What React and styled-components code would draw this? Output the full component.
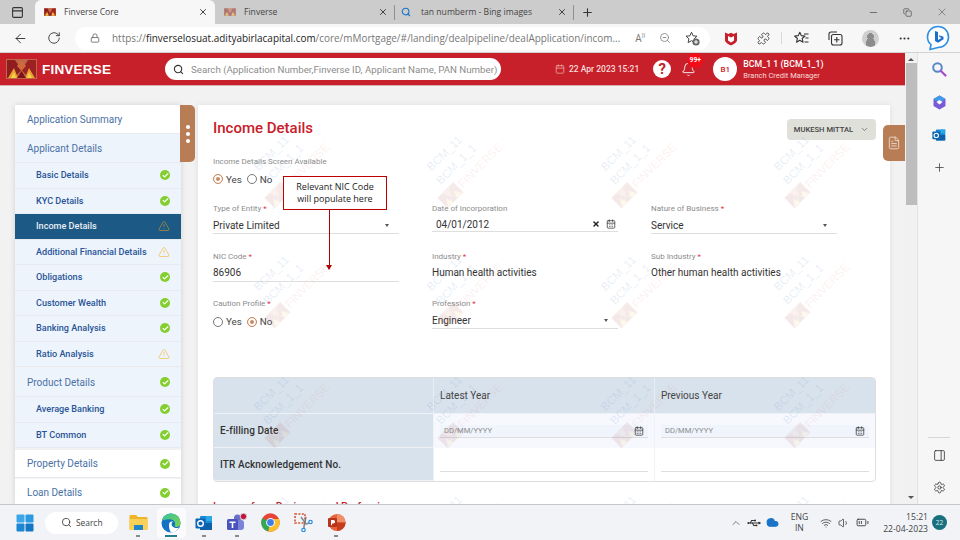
import React from "react";
import styled, { createGlobalStyle } from "styled-components";
import {
  ArrowLeft,
  RotateCw,
  Lock,
  Search,
  ZoomOut,
  Puzzle,
  Plus,
  X,
  Minus,
  Calendar,
  Bell,
  ChevronDown,
  ChevronUp,
  FileText,
  Settings,
  PanelRight,
  PanelTop,
  Wifi,
  Volume1,
  BatteryMedium,
  Usb,
  Cloud,
  Check,
  TriangleAlert,
  CalendarDays,
  Copy,
  MoreHorizontal,
} from "lucide-react";

const GlobalStyle = createGlobalStyle`
  html, body {
    margin: 0;
    padding: 0;
    background: #f2f2f2;
  }
  * {
    box-sizing: border-box;
  }
`;

const appFont = `"Roboto", "Liberation Sans", sans-serif`;
const uiFont = `"Open Sans", "Liberation Sans", sans-serif`;

const sideItems = [
  { label: "Application Summary", level: "top" },
  { label: "Applicant Details", level: "section" },
  { label: "Basic Details", level: "sub", status: "ok" },
  { label: "KYC Details", level: "sub", status: "ok" },
  { label: "Income Details", level: "sub", status: "warn", active: true },
  { label: "Additional Financial Details", level: "sub", status: "warn" },
  { label: "Obligations", level: "sub", status: "ok" },
  { label: "Customer Wealth", level: "sub", status: "ok" },
  { label: "Banking Analysis", level: "sub", status: "ok" },
  { label: "Ratio Analysis", level: "sub", status: "warn", last: true },
  { label: "Product Details", level: "section", status: "ok" },
  { label: "Average Banking", level: "sub", status: "ok" },
  { label: "BT Common", level: "sub", status: "ok", last: true },
  { label: "Property Details", level: "top", status: "ok", spaced: true },
  { label: "Loan Details", level: "top", status: "ok", spaced: true },
];

const AbcLogo = ({ w = 31, h = 20 }) => (
  <svg width={w} height={h} viewBox="0 0 31 20">
    <rect width="31" height="20" fill="#c0674a" />
    <polygon points="1,1 9,1 15.5,11 8,19 1,19" fill="#8f1d1f" />
    <polygon points="30,1 22,1 15.5,11 23,19 30,19" fill="#9c2122" />
    <polygon points="15.5,1 11,7 15.5,12 20,7" fill="#cf6a3a" />
    <polygon points="2,19 8,9 12,19" fill="#e9a02f" />
    <polygon points="19,19 23,9 29,19" fill="#e9a02f" />
    <polygon points="5,19 8,13 10,19" fill="#f6d24a" />
    <polygon points="21,19 23,13 26,19" fill="#f6d24a" />
    <polygon points="11,19 15.5,12 20,19" fill="#7a1418" />
  </svg>
);

const McAfeeIcon = () => (
  <svg width="14" height="15" viewBox="0 0 14 15">
    <path
      d="M1 1.5 L4.5 3 L7 1.8 L9.5 3 L13 1.5 V9 C13 11.5 9.5 13.5 7 14.5 C4.5 13.5 1 11.5 1 9 Z"
      fill="#c8202a"
    />
    <path d="M4 5 L7 6.5 L10 5 V9.5 L7 11.5 L4 9.5 Z" fill="#fff" />
  </svg>
);

const BingIcon = () => (
  <svg width="24" height="26" viewBox="0 0 24 26">
    <path
      d="M12 1.5 C18 1.5 22.5 6 22.5 12 C22.5 18 18 22.5 12 22.5 L4 24.5 L5 19.5 C2.5 17.5 1.5 15 1.5 12 C1.5 6 6 1.5 12 1.5 Z"
      fill="#fff"
      stroke="#2f8fe6"
      strokeWidth="1.6"
    />
    <path
      d="M9 6 L12 7 V15 L15.5 13 L13.5 12 L12.8 10.2 L17.5 11.8 V14.2 L12 17.8 L9 16 Z"
      fill="#1b6fd0"
    />
  </svg>
);

const StarAddIcon = () => (
  <svg width="15" height="15" viewBox="0 0 15 15">
    <path
      d="M6.5 1.2 L8.1 4.8 L12 5.2 L9.1 7.8 L9.9 11.6 L6.5 9.7 L3.1 11.6 L3.9 7.8 L1 5.2 L4.9 4.8 Z"
      fill="none"
      stroke="#444"
      strokeWidth="1"
      strokeLinejoin="round"
    />
    <circle cx="11" cy="11" r="3.6" fill="#666" />
    <path d="M11 9 V13 M9 11 H13" stroke="#fff" strokeWidth="1" />
  </svg>
);

const FavoritesIcon = () => (
  <svg width="15" height="14" viewBox="0 0 15 14">
    <path
      d="M5.8 1.2 L7.3 4.6 L11 5 L8.2 7.5 L9 11.2 L5.8 9.3 L2.6 11.2 L3.4 7.5 L.6 5 L4.3 4.6 Z"
      fill="none"
      stroke="#333"
      strokeWidth="1.1"
      strokeLinejoin="round"
    />
    <path d="M10 3 H14.5 M11.5 7 H14.5 M10.5 11 H14.5" stroke="#333" strokeWidth="1.1" />
  </svg>
);

const CollectionsIcon = () => (
  <svg width="15" height="15" viewBox="0 0 15 15">
    <path d="M1 9 V3 A2 2 0 0 1 3 1 H9" fill="none" stroke="#333" strokeWidth="1.1" />
    <rect x="3.5" y="3.5" width="10.5" height="10.5" rx="2" fill="none" stroke="#333" strokeWidth="1.1" />
    <path d="M8.8 6 V11.5 M6 8.8 H11.5" stroke="#333" strokeWidth="1.1" />
  </svg>
);

const EdgeIcon = () => (
  <svg width="20" height="20" viewBox="0 0 20 20">
    <defs>
      <linearGradient id="edgeA" x1="0" y1="0" x2="1" y2="1">
        <stop offset="0" stopColor="#35c1a0" />
        <stop offset="1" stopColor="#7fd44a" />
      </linearGradient>
    </defs>
    <circle cx="10" cy="10" r="9.5" fill="#1272c4" />
    <path d="M1 8 C2 2 7 .5 10 .5 C15 .5 19.5 4 19.5 10.5 C19.5 13.5 16 14.5 13.5 13.5 C15 11 14 7 10 6.5 C6 6 2.5 7 1 8 Z" fill="url(#edgeA)" />
    <path d="M8 12 C8 9 10 8 12 8.5 C10 10 10 13 13 14.5 C15.5 15.5 17 15 18 14.5 C16.5 17.5 13.5 19.5 10.5 19.5 C9 19 8 15.5 8 12 Z" fill="#fff" />
  </svg>
);

const OutlookIcon = ({ size = 18 }) => (
  <svg width={size} height={size} viewBox="0 0 18 18">
    <rect x="5" y="2" width="12" height="14" rx="1" fill="#1a8ad4" />
    <rect x="11" y="2" width="6" height="5" fill="#2aa9e8" />
    <rect x="5" y="9" width="12" height="7" fill="#0f5ea8" />
    <rect x="0.5" y="4.5" width="10" height="10" rx="1" fill="#0b64b4" />
    <circle cx="5.5" cy="9.5" r="2.8" fill="none" stroke="#fff" strokeWidth="1.4" />
  </svg>
);

const TeamsIcon = () => (
  <svg width="22" height="20" viewBox="0 0 22 20">
    <circle cx="11.5" cy="5" r="3.5" fill="#6a70c8" />
    <rect x="8" y="7" width="10" height="10" rx="3" fill="#7b83d8" />
    <rect x="1" y="6" width="11" height="11" rx="1.5" fill="#4b53bc" />
    <path d="M3.5 8.5 H9.5 V10 H7.3 V15 H5.7 V10 H3.5 Z" fill="#fff" />
    <circle cx="17.5" cy="3.5" r="3.2" fill="#c4123a" stroke="#d8d8e0" strokeWidth="1" />
  </svg>
);

const ChromeIcon = () => (
  <svg width="19" height="19" viewBox="0 0 19 19">
    <circle cx="9.5" cy="9.5" r="9.2" fill="#e8453a" />
    <path d="M9.5 9.5 L1.4 5 A9.2 9.2 0 0 0 7.2 18.4 Z" fill="#34a853" />
    <path d="M9.5 6 H18 A9.2 9.2 0 0 1 7.2 18.4 L9.5 9.5 Z" fill="#fbc02d" />
    <circle cx="9.5" cy="9.5" r="4.4" fill="#fff" />
    <circle cx="9.5" cy="9.5" r="3.4" fill="#3f80e8" />
  </svg>
);

const SnipIcon = () => (
  <svg width="19" height="19" viewBox="0 0 19 19">
    <rect x="1" y="1" width="10" height="9" fill="none" stroke="#d8502f" strokeWidth="1.6" strokeDasharray="2 1.4" />
    <path d="M7 4 L12 11 L18 9" fill="none" stroke="#8d8d8d" strokeWidth="1.6" />
    <path d="M12 4 L10 13 V16" fill="none" stroke="#7a7a7a" strokeWidth="1.4" />
    <circle cx="16.5" cy="9" r="1.7" fill="#fff" stroke="#2a8fdc" strokeWidth="1.2" />
    <circle cx="9.5" cy="17" r="1.7" fill="#fff" stroke="#2a8fdc" strokeWidth="1.2" />
  </svg>
);

const PowerPointIcon = () => (
  <svg width="19" height="19" viewBox="0 0 19 19">
    <circle cx="10" cy="9.5" r="8.6" fill="#e8643e" />
    <path d="M10 1 A8.6 8.6 0 0 1 18.6 9.5 H10 Z" fill="#f0906a" />
    <path d="M10 9.5 H18.6 A8.6 8.6 0 0 1 10 18 Z" fill="#c43e1c" />
    <rect x="1" y="5" width="9" height="9" rx="1" fill="#b8341a" />
    <path d="M4 7 H6.4 A1.6 1.6 0 0 1 6.4 10.4 H5 V12.2 H4 Z" fill="#fff" />
  </svg>
);

const FolderIcon = () => (
  <svg width="19" height="19" viewBox="0 0 19 19">
    <path d="M.5 3 A1 1 0 0 1 1.5 2 H7 L9 4 H17.5 A1 1 0 0 1 18.5 5 V16 A1 1 0 0 1 17.5 17 H1.5 A1 1 0 0 1 .5 16 Z" fill="#f0b429" />
    <rect x=".5" y="6" width="18" height="11" rx="1" fill="#fad158" />
    <rect x="5" y="12" width="9" height="5" fill="#1f86c9" />
  </svg>
);

const WindowsIcon = () => (
  <svg width="18" height="18" viewBox="0 0 18 18">
    <rect x="0.5" y="0.5" width="8" height="8" rx="1" fill="#39a7e8" />
    <rect x="9.5" y="0.5" width="8" height="8" rx="1" fill="#2b9ae2" />
    <rect x="0.5" y="9.5" width="8" height="8" rx="1" fill="#1d86d2" />
    <rect x="9.5" y="9.5" width="8" height="8" rx="1" fill="#1277c4" />
  </svg>
);

const ColorSearch = () => (
  <svg width="16" height="16" viewBox="0 0 16 16">
    <circle cx="6.5" cy="6.5" r="4.3" fill="none" stroke="#5a86c8" strokeWidth="2" />
    <path d="M10 10 L14.5 14.5" stroke="#a84bd0" strokeWidth="2.2" strokeLinecap="round" />
  </svg>
);

const CopilotCube = () => (
  <svg width="15" height="15" viewBox="0 0 15 15">
    <polygon points="7.5,0.5 13.5,4 13.5,11 7.5,14.5 1.5,11 1.5,4" fill="#7a5bd6" />
    <polygon points="7.5,0.5 13.5,4 7.5,7.5 1.5,4" fill="#3d9ce8" />
    <polygon points="7.5,5 10.5,7 7.5,9.5 4.5,7" fill="#fff" />
  </svg>
);

const StatusIcon = ({ status, active }) => {
  if (status === "ok") {
    return (
      <OkDot>
        <Check size={7} strokeWidth={4} color="#fff" />
      </OkDot>
    );
  }
  if (status === "warn") {
    return <TriangleAlert size={12} strokeWidth={1.6} color={active ? "#a38c3c" : "#f2c261"} />;
  }
  return null;
};

const Field = ({ label, required, value, select, date }) => (
  <FieldBox>
    <FieldLabel>
      {label}
      {required && <Req> *</Req>}
    </FieldLabel>
    <FieldValue $date={date} $underline={select || date || label === "NIC Code"}>
      <span>{value}</span>
      {select && <Caret />}
      {date && (
        <DateIcons>
          <X size={8} strokeWidth={4.5} color="#222" />
          <CalendarDays size={10} color="#444" />
        </DateIcons>
      )}
    </FieldValue>
  </FieldBox>
);

const RadioPair = ({ selected }) => (
  <RadioRow>
    <RadioItem>
      <RadioDot $on={selected === "Yes"} />
      Yes
    </RadioItem>
    <RadioItem>
      <RadioDot $on={selected === "No"} />
      No
    </RadioItem>
  </RadioRow>
);

const Stamp = () => (
  <StampBox>
    <StampLine>BCM_11</StampLine>
    <StampLine $second>BCM_1_1</StampLine>
    <StampBrand>
      <StampLogo>
        <AbcLogo w={23} h={16} />
      </StampLogo>
      FINVERSE
    </StampBrand>
  </StampBox>
);

const App = () => {
  return (
    <>
      <GlobalStyle />
      <Screen>
        <TabStrip>
          <TabToggle>
            <PanelTop size={13} color="#333" />
          </TabToggle>
          <Tab $active>
            <AbcLogo w={12} h={8} />
            <TabTitle>Finverse Core</TabTitle>
            <X size={10} color="#333" strokeWidth={2.2} />
          </Tab>
          <Tab>
            <Faded>
              <AbcLogo w={12} h={8} />
            </Faded>
            <TabTitle>Finverse</TabTitle>
            <X size={10} color="#333" strokeWidth={2.2} />
          </Tab>
          <TabDivider />
          <Tab $small>
            <Search size={10} color="#1a73c8" strokeWidth={2.6} />
            <TabTitle>tan numberm - Bing images</TabTitle>
            <X size={10} color="#333" strokeWidth={2.2} />
          </Tab>
          <TabDivider />
          <NewTab>
            <Plus size={13} color="#333" />
          </NewTab>
          <WindowControls>
            <Minus size={11} color="#666" />
            <Copy size={9} color="#555" />
            <X size={12} color="#666" strokeWidth={1.4} />
          </WindowControls>
        </TabStrip>

        <AddressRow>
          <NavIcons>
            <ArrowLeft size={15} color="#333" strokeWidth={1.5} />
            <RotateCw size={14} color="#333" strokeWidth={1.5} />
          </NavIcons>
          <UrlPill>
            <Lock size={10} color="#666" />
            <UrlText>
              https://<b>finverselosuat.adityabirlacapital.com</b>/core/mMortgage/#/landing/dealpipeline/dealApplication/incom...
            </UrlText>
            <UrlActions>
              <ReadAloud>
                A<small>))</small>
              </ReadAloud>
              <ZoomOut size={12} color="#777" strokeWidth={1.5} />
              <StarAddIcon />
            </UrlActions>
          </UrlPill>
          <BrowserTools>
            <McAfeeIcon />
            <Puzzle size={13} color="#333" strokeWidth={1.5} />
            <ToolDivider />
            <FavoritesIcon />
            <CollectionsIcon />
            <AvatarBlob />
            <MoreHorizontal size={13} color="#333" />
          </BrowserTools>
          <BingSlot>
            <BingIcon />
          </BingSlot>
        </AddressRow>

        <Workspace>
          <Viewport>
            <AppHeader>
              <Brand>
                <AbcLogo />
                <BrandName>FINVERSE</BrandName>
              </Brand>
              <SearchPill>
                <Search size={11} color="#333" strokeWidth={2.4} />
                <span>Search (Application Number,Finverse ID, Applicant Name, PAN Number)</span>
              </SearchPill>
              <DateStamp>
                <Calendar size={10} color="#e9a29c" />
                22 Apr 2023 15:21
              </DateStamp>
              <HelpBadge>?</HelpBadge>
              <BellWrap>
                <Bell size={15} color="#fff" strokeWidth={1.4} />
                <BellCount>99+</BellCount>
              </BellWrap>
              <UserDot>B1</UserDot>
              <UserInfo>
                <UserName>BCM_1 1 (BCM_1_1)</UserName>
                <UserRole>Branch Credit Manager</UserRole>
              </UserInfo>
            </AppHeader>

            <ContentArea>
              <SideColumn>
                <SideList>
                  {sideItems.map((item) => (
                    <SideRow
                      key={item.label}
                      $level={item.level}
                      $active={item.active}
                      $last={item.last}
                      $spaced={item.spaced}
                    >
                      <span>{item.label}</span>
                      <StatusIcon status={item.status} active={item.active} />
                    </SideRow>
                  ))}
                </SideList>
                <SideHandle>
                  <i />
                  <i />
                  <i />
                </SideHandle>
              </SideColumn>

              <MainCard>
                <TitleRow>
                  <PageTitle>Income Details</PageTitle>
                  <OwnerButton>
                    MUKESH MITTAL
                    <ChevronDown size={9} color="#666" />
                  </OwnerButton>
                </TitleRow>

                <FormGrid>
                  <FieldBox>
                    <FieldLabel>Income Details Screen Available</FieldLabel>
                    <RadioPair selected="Yes" />
                  </FieldBox>
                  <span />
                  <span />
                  <Field label="Type of Entity" required value="Private Limited" select />
                  <Field label="Date of Incorporation" value="04/01/2012" date />
                  <Field label="Nature of Business" required value="Service" select />
                  <Field label="NIC Code" required value="86906" />
                  <Field label="Industry" required value="Human health activities" />
                  <Field label="Sub Industry" required value="Other human health activities" />
                  <FieldBox>
                    <FieldLabel>
                      Caution Profile<Req> *</Req>
                    </FieldLabel>
                    <RadioPair selected="No" />
                  </FieldBox>
                  <Field label="Profession" required value="Engineer" select />
                </FormGrid>

                <YearTable>
                  <HeadCell />
                  <HeadCell $divider>Latest Year</HeadCell>
                  <HeadCell $divider>Previous Year</HeadCell>
                  <RowLabel>E-filling Date</RowLabel>
                  <TintCell>
                    <DateInput>
                      DD/MM/YYYY
                      <CalendarDays size={10} color="#444" />
                    </DateInput>
                  </TintCell>
                  <TintCell>
                    <DateInput>
                      DD/MM/YYYY
                      <CalendarDays size={10} color="#444" />
                    </DateInput>
                  </TintCell>
                  <RowLabel>ITR Acknowledgement No.</RowLabel>
                  <PlainCell>
                    <BlankInput />
                  </PlainCell>
                  <PlainCell>
                    <BlankInput />
                  </PlainCell>
                </YearTable>

                <SectionHeading>Income from Business and Profession</SectionHeading>

                <StampLayer>
                  {Array.from({ length: 16 }).map((_, i) => (
                    <Stamp key={i} />
                  ))}
                </StampLayer>

                <Callout>
                  Relevant NIC Code
                  <br />
                  will populate here
                </Callout>
                <CalloutArrow />
              </MainCard>

              <DocTab>
                <FileText size={14} color="#f3e6da" strokeWidth={1.4} />
              </DocTab>
            </ContentArea>
          </Viewport>

          <ScrollTrack>
            <ScrollArrow $up />
            <ScrollThumb />
            <ScrollArrow />
          </ScrollTrack>

          <EdgeRail>
            <RailGroup>
              <ColorSearch />
              <CopilotCube />
              <OutlookIcon size={14} />
              <Plus size={13} color="#444" strokeWidth={1.5} />
            </RailGroup>
            <RailBottom>
              <RailDivider />
              <PanelRight size={13} color="#333" strokeWidth={1.5} />
              <Settings size={13} color="#333" strokeWidth={1.5} />
            </RailBottom>
          </EdgeRail>
        </Workspace>

        <Taskbar>
          <TaskLeft>
            <WindowsIcon />
            <TaskSearch>
              <Search size={11} color="#333" strokeWidth={1.8} />
              Search
            </TaskSearch>
            <TaskApps>
              <TaskApp $open>
                <FolderIcon />
              </TaskApp>
              <TaskApp $open $active>
                <EdgeIcon />
              </TaskApp>
              <TaskApp $open>
                <OutlookIcon />
              </TaskApp>
              <TaskApp $open>
                <TeamsIcon />
              </TaskApp>
              <TaskApp>
                <ChromeIcon />
              </TaskApp>
              <TaskApp>
                <SnipIcon />
              </TaskApp>
              <TaskApp $open>
                <PowerPointIcon />
              </TaskApp>
            </TaskApps>
          </TaskLeft>
          <Tray>
            <ChevronUp size={12} color="#444" strokeWidth={1.4} />
            <TrayUsb size={12} color="#333" />
            <Cloud size={13} color="#1a73c8" fill="#1a73c8" />
            <Lang>
              ENG
              <br />
              IN
            </Lang>
            <Wifi size={12} color="#333" strokeWidth={1.5} />
            <Volume1 size={12} color="#333" strokeWidth={1.5} />
            <BatteryMedium size={13} color="#333" strokeWidth={1.6} />
            <Clock>
              15:21
              <br />
              22-04-2023
            </Clock>
            <NotifyDot>22</NotifyDot>
          </Tray>
        </Taskbar>
      </Screen>
    </>
  );
};

export default App;

const Screen = styled.div`
  display: flex;
  flex-direction: column;
  width: 960px;
  height: 540px;
  overflow: hidden;
  background: #f2f2f2;
  font-family: ${appFont};
`;

const TabStrip = styled.div`
  display: flex;
  align-items: center;
  flex: 0 0 24px;
  background: #cccccc;
  font-family: ${uiFont};
`;

const TabToggle = styled.div`
  display: flex;
  align-items: center;
  justify-content: center;
  width: 35px;
  height: 24px;
`;

const Tab = styled.div`
  display: flex;
  align-items: center;
  width: ${(p) => (p.$small ? "178px" : p.$active ? "180px" : "179px")};
  height: 24px;
  padding: 0 ${(p) => (p.$active ? "7px" : "6px")} 0 ${(p) => (p.$small ? "6px" : "9px")};
  gap: ${(p) => (p.$small ? "10px" : "8px")};
  border-radius: 6px 6px 0 0;
  background: ${(p) => (p.$active ? "#f7f7f7" : "transparent")};
`;

const TabTitle = styled.span`
  flex: 1;
  font-size: 8.6px;
  color: #444;
  white-space: nowrap;
`;

const Faded = styled.span`
  display: flex;
  opacity: 0.5;
`;

const TabDivider = styled.div`
  width: 1px;
  height: 15px;
  background: #8f8f8f;
`;

const NewTab = styled.div`
  display: flex;
  padding-left: 7px;
`;

const WindowControls = styled.div`
  display: flex;
  align-items: center;
  gap: 24px;
  margin-left: auto;
  padding-right: 12px;
`;

const AddressRow = styled.div`
  display: flex;
  align-items: center;
  flex: 0 0 29px;
  background: #f7f7f7;
  border-bottom: 1px solid #d2d2d2;
  font-family: ${uiFont};
`;

const NavIcons = styled.div`
  display: flex;
  align-items: center;
  gap: 19px;
  width: 75px;
  padding-left: 13px;
`;

const UrlPill = styled.div`
  display: flex;
  align-items: center;
  flex: 0 0 635px;
  height: 23px;
  padding: 0 10px 0 15px;
  gap: 12px;
  border-radius: 12px;
  background: #fff;
`;

const UrlText = styled.span`
  flex: 1;
  font-size: 9.95px;
  color: #777;
  white-space: nowrap;

  b {
    font-weight: 400;
    color: #222;
  }
`;

const UrlActions = styled.div`
  display: flex;
  align-items: center;
  gap: 14px;
`;

const ReadAloud = styled.span`
  font-size: 10px;
  color: #777;

  small {
    font-size: 6px;
    vertical-align: top;
  }
`;

const BrowserTools = styled.div`
  display: flex;
  align-items: center;
  gap: 19px;
  padding-left: 14px;
  flex: 0 0 205px;
`;

const ToolDivider = styled.div`
  width: 1px;
  height: 12px;
  margin: 0 -7px 0 -8px;
  background: #d8d8d8;
`;

const AvatarBlob = styled.div`
  width: 17px;
  height: 17px;
  border-radius: 50%;
  background: radial-gradient(circle at 50% 38%, #8c8c8c 0 24%, transparent 26%),
    radial-gradient(ellipse at 50% 95%, #8c8c8c 0 40%, transparent 42%), #cfcfcf;
`;

const BingSlot = styled.div`
  display: flex;
  justify-content: center;
  flex: 1;
`;

const Workspace = styled.div`
  display: flex;
  flex: 1;
  min-height: 0;
  height: 452px;
`;

const Viewport = styled.div`
  display: flex;
  flex-direction: column;
  width: 905px;
  min-height: 0;
`;

const AppHeader = styled.div`
  display: flex;
  align-items: center;
  flex: 0 0 33px;
  padding-left: 6px;
  background: #c8202a;
  border-bottom: 1px solid #d8b0b0;
  color: #fff;
`;

const Brand = styled.div`
  display: flex;
  align-items: center;
  gap: 5px;
  width: 159px;
`;

const BrandName = styled.span`
  font-family: "Liberation Sans", sans-serif;
  font-size: 13.5px;
  font-weight: 700;
  letter-spacing: 0.2px;
`;

const SearchPill = styled.div`
  display: flex;
  align-items: center;
  gap: 7px;
  width: 336px;
  height: 22px;
  padding-left: 8px;
  border-radius: 11px;
  background: #fff;
  color: #8c8c8c;
  font-size: 9.7px;
  white-space: nowrap;
`;

const DateStamp = styled.div`
  display: flex;
  align-items: center;
  gap: 4px;
  margin-left: 54px;
  font-size: 8.5px;
  font-weight: 500;
  color: #f6dcda;
`;

const HelpBadge = styled.div`
  display: flex;
  align-items: center;
  justify-content: center;
  width: 18px;
  height: 18px;
  margin-left: 14px;
  border-radius: 50%;
  background: #fff;
  color: #c8202a;
  font-size: 15px;
  font-weight: 700;
`;

const BellWrap = styled.div`
  position: relative;
  display: flex;
  margin-left: 10px;
`;

const BellCount = styled.span`
  position: absolute;
  top: -9px;
  left: 6px;
  width: 16px;
  height: 15px;
  border-radius: 50%;
  background: #f00d18;
  font-size: 6.8px;
  font-weight: 700;
  line-height: 14px;
  text-align: center;
`;

const UserDot = styled.div`
  display: flex;
  align-items: center;
  justify-content: center;
  width: 24px;
  height: 24px;
  margin-left: 17px;
  border-radius: 50%;
  background: #fff;
  color: #c8202a;
  font-size: 8px;
  font-weight: 500;
`;

const UserInfo = styled.div`
  display: flex;
  flex-direction: column;
  gap: 2px;
  margin-left: 6px;
`;

const UserName = styled.span`
  font-size: 8.8px;
  font-weight: 500;
`;

const UserRole = styled.span`
  font-size: 7.5px;
  color: #f6dcda;
`;

const ContentArea = styled.div`
  position: relative;
  display: flex;
  flex: 1;
  min-height: 0;
  gap: 17px;
  padding: 19px 15px 0;
  overflow: hidden;
`;

const SideColumn = styled.div`
  position: relative;
  flex: 0 0 166px;
`;

const SideList = styled.div`
  display: flex;
  flex-direction: column;
  box-shadow: 0 0 6px rgba(0, 0, 0, 0.14);
`;

const SideRow = styled.div`
  display: flex;
  flex: 0 0 auto;
  align-items: center;
  justify-content: space-between;
  height: ${(p) => (p.$level === "sub" ? "25.5px" : p.$spaced ? "28px" : "29px")};
  padding: 0 ${(p) => (p.$level === "sub" ? "11px 0 21px" : "11px 0 12px")};
  margin-top: ${(p) => (p.$spaced ? "1px" : "0")};
  margin-bottom: ${(p) => (p.$last ? "1px" : "0")};
  border-bottom: 1px solid #e6ebf2;
  background: ${(p) =>
    p.$active ? "#1c5a85" : p.$level === "top" ? "#fff" : "#eef4fc"};
  color: ${(p) => (p.$active ? "#e8eef4" : p.$level === "sub" ? "#2a5597" : "#4a72a6")};
  font-size: ${(p) => (p.$level === "sub" ? "9.1px" : "10px")};
  font-weight: ${(p) => (p.$level === "sub" ? 500 : 400)};
  white-space: nowrap;
`;

const OkDot = styled.span`
  display: flex;
  align-items: center;
  justify-content: center;
  width: 10px;
  height: 10px;
  border-radius: 50%;
  background: #84cf2f;
`;

const SideHandle = styled.div`
  position: absolute;
  top: 0;
  right: -14px;
  display: flex;
  flex-direction: column;
  align-items: center;
  justify-content: center;
  gap: 3px;
  width: 15px;
  height: 57px;
  border-radius: 0 5px 5px 0;
  background: #b87d55;

  i {
    width: 4px;
    height: 4px;
    border-radius: 50%;
    background: #fff;
  }
`;

const MainCard = styled.div`
  position: relative;
  flex: 1;
  height: 420px;
  padding: 14px 14px 0 15px;
  overflow: hidden;
  background: #fff;
  box-shadow: 0 0 6px rgba(0, 0, 0, 0.08);
`;

const TitleRow = styled.div`
  display: flex;
  align-items: center;
  justify-content: space-between;
  height: 21px;
`;

const PageTitle = styled.h1`
  margin: 0 0 3px;
  font-size: 15px;
  font-weight: 500;
  color: #c8202a;
`;

const OwnerButton = styled.div`
  display: flex;
  align-items: center;
  justify-content: center;
  gap: 7px;
  width: 89px;
  height: 21px;
  border-radius: 4px;
  background: #e0e0da;
  color: #444;
  font-size: 7.6px;
  font-weight: 500;
`;

const FormGrid = styled.div`
  display: grid;
  grid-template-columns: 186px 186px 186px;
  grid-auto-rows: 47.5px;
  column-gap: 33px;
  margin-top: 15.5px;
`;

const FieldBox = styled.div`
  display: flex;
  flex-direction: column;
`;

const FieldLabel = styled.label`
  height: 12px;
  font-size: 8px;
  line-height: 12px;
  color: #8c8c8c;
`;

const Req = styled.span`
  color: #e8353f;
`;

const FieldValue = styled.div`
  display: flex;
  align-items: center;
  justify-content: space-between;
  height: ${(p) => (p.$date ? "17px" : "19px")};
  padding: 2px ${(p) => (p.$date ? "2px" : "3px")} 0 ${(p) => (p.$date ? "4px" : "0")};
  border-bottom: 1px solid ${(p) => (p.$underline ? "#dedede" : "transparent")};
  color: #333;
  font-size: 10px;
  white-space: nowrap;
`;

const Caret = styled.i`
  width: 0;
  height: 0;
  margin-right: 7px;
  border-left: 2.5px solid transparent;
  border-right: 2.5px solid transparent;
  border-top: 3px solid #555;
`;

const DateIcons = styled.span`
  display: flex;
  align-items: center;
  gap: 6px;
`;

const RadioRow = styled.div`
  display: flex;
  align-items: center;
  gap: 5px;
  height: 23px;
`;

const RadioItem = styled.span`
  display: flex;
  align-items: center;
  gap: 3px;
  color: #444;
  font-size: 9.8px;
`;

const RadioDot = styled.i`
  width: 10px;
  height: 10px;
  border: 1px solid ${(p) => (p.$on ? "#c98a62" : "#777")};
  border-radius: 50%;
  background: ${(p) => (p.$on ? "#c98a62" : "#fff")};
  box-shadow: ${(p) => (p.$on ? "inset 0 0 0 2px #fff" : "none")};
`;

const YearTable = styled.div`
  display: grid;
  grid-template-columns: 219px 221px 1fr;
  grid-template-rows: 36px 34px 33px;
  margin-top: 31.5px;
  overflow: hidden;
  border: 1px solid #dedede;
  border-radius: 4px;
`;

const HeadCell = styled.div`
  display: flex;
  align-items: center;
  padding-left: 6px;
  background: #d8e2ec;
  border-left: 1px solid ${(p) => (p.$divider ? "#e8eef4" : "transparent")};
  border-bottom: 1px solid #eef2f7;
  color: #444;
  font-size: 10px;
`;

const RowLabel = styled.div`
  display: flex;
  align-items: center;
  padding-left: 6px;
  background: #d8e2ec;
  border-bottom: 1px solid #eef2f7;
  color: #333;
  font-size: 10px;
  font-weight: 500;
  letter-spacing: 0.1px;
`;

const TintCell = styled.div`
  display: flex;
  align-items: center;
  padding: 0 6px;
  background: #f6f8fe;
  border-left: 1px solid #f0f2f6;
`;

const DateInput = styled.div`
  display: flex;
  flex: 1;
  align-items: center;
  justify-content: space-between;
  height: 13px;
  padding: 0 4px;
  background: #eff4fd;
  border-bottom: 1px solid #dedede;
  color: #8c8c8c;
  font-size: 7.6px;
`;

const PlainCell = styled.div`
  display: flex;
  align-items: flex-end;
  padding: 0 6px 9px;
  border-left: 1px solid #f0f2f6;
`;

const BlankInput = styled.div`
  flex: 1;
  border-bottom: 1px solid #dedede;
`;

const SectionHeading = styled.h2`
  margin: 18px 0 0;
  font-size: 10.5px;
  font-weight: 500;
  color: #c8202a;
`;

const StampLayer = styled.div`
  position: absolute;
  top: 24px;
  left: 46px;
  display: grid;
  grid-template-columns: repeat(4, 173.3px);
  grid-auto-rows: 120px;
  pointer-events: none;
`;

const StampBox = styled.div`
  display: flex;
  flex-direction: column;
  align-items: flex-start;
  gap: 6px;
  width: 95px;
  height: 44px;
  margin-top: 6px;
  transform: rotate(-45deg);
  font-family: "Liberation Sans", sans-serif;
  font-size: 11.5px;
  line-height: 10px;
  white-space: nowrap;
`;

const StampLine = styled.span`
  margin-left: ${(p) => (p.$second ? "11px" : "14px")};
  color: rgba(70, 120, 190, 0.14);
`;

const StampBrand = styled.span`
  position: relative;
  margin: 2px 0 0 24px;
  color: rgba(220, 60, 60, 0.09);
`;

const StampLogo = styled.span`
  position: absolute;
  top: -3px;
  left: -25px;
  opacity: 0.09;
`;

const Callout = styled.div`
  position: absolute;
  top: 71px;
  left: 85px;
  width: 104px;
  height: 34px;
  padding-top: 4px;
  border: 1.5px solid #c00000;
  background: #fff;
  color: #222;
  font-family: ${uiFont};
  font-size: 9px;
  line-height: 12px;
  text-align: center;
`;

const CalloutArrow = styled.div`
  position: absolute;
  top: 104px;
  left: 130.5px;
  width: 1.5px;
  height: 60px;
  background: #b00000;

  &::after {
    content: "";
    position: absolute;
    bottom: -1px;
    left: -2.5px;
    border-left: 3px solid transparent;
    border-right: 3px solid transparent;
    border-top: 5px solid #b00000;
  }
`;

const DocTab = styled.div`
  position: absolute;
  top: 39px;
  right: 0;
  display: flex;
  align-items: center;
  justify-content: center;
  width: 22px;
  height: 36px;
  border-radius: 5px 0 0 5px;
  background: #b87d55;
`;

const ScrollTrack = styled.div`
  display: flex;
  flex-direction: column;
  align-items: center;
  flex: 0 0 12px;
  padding: 5px 0;
  background: #f1f1f1;
`;

const ScrollThumb = styled.div`
  width: 11px;
  height: 142px;
  margin-top: 2px;
  background: #bdbdbd;
`;

const ScrollArrow = styled.i`
  width: 0;
  height: 0;
  margin-top: ${(p) => (p.$up ? "0" : "auto")};
  border-left: 3px solid transparent;
  border-right: 3px solid transparent;
  ${(p) => (p.$up ? "border-bottom: 3px solid #555;" : "border-top: 3px solid #555;")}
`;

const EdgeRail = styled.div`
  display: flex;
  flex-direction: column;
  justify-content: space-between;
  flex: 1;
  padding-bottom: 10px;
  background: #f6f6f6;
  border-left: 1px solid #e2e2e2;
`;

const RailGroup = styled.div`
  display: grid;
  grid-auto-rows: 32.7px;
  justify-items: center;
  align-items: center;
`;

const RailBottom = styled.div`
  display: flex;
  flex-direction: column;
  align-items: center;
  gap: 19px;
`;

const RailDivider = styled.div`
  width: 22px;
  height: 1px;
  margin-bottom: -8px;
  background: #d6d6d6;
`;

const Taskbar = styled.div`
  display: flex;
  align-items: center;
  justify-content: space-between;
  flex: 0 0 36px;
  padding: 0 13px 0 16px;
  background: #f1f3f7;
  border-top: 1px solid #c6c6c6;
  font-family: ${uiFont};
`;

const TaskLeft = styled.div`
  display: flex;
  align-items: center;
`;

const TaskSearch = styled.div`
  display: flex;
  align-items: center;
  gap: 4px;
  width: 73px;
  height: 22px;
  margin-left: 11px;
  padding-left: 16px;
  border-radius: 11px;
  background: #fff;
  color: #444;
  font-size: 8.4px;
`;

const TaskApps = styled.div`
  display: flex;
  align-items: center;
  margin-left: 3.5px;
`;

const TaskApp = styled.div`
  position: relative;
  display: flex;
  align-items: center;
  justify-content: center;
  width: 33px;
  height: 30px;
  border-left: 2.5px solid transparent;
  border-right: 2.5px solid transparent;
  border-radius: 5px;
  background: ${(p) => (p.$active ? "#fbfbfd" : "transparent")};
  background-clip: padding-box;

  &::after {
    content: "";
    display: ${(p) => (p.$open ? "block" : "none")};
    position: absolute;
    bottom: 1px;
    left: 50%;
    width: ${(p) => (p.$active ? "12px" : "4px")};
    height: 2px;
    margin-left: ${(p) => (p.$active ? "-6px" : "-2px")};
    background: ${(p) => (p.$active ? "#1f7f8f" : "#8a8a8a")};
  }
`;

const Tray = styled.div`
  display: flex;
  align-items: center;
  gap: 6px;
  color: #444;
  font-size: 8.6px;
`;

const TrayUsb = styled(Usb)`
  transform: rotate(45deg);
`;

const Lang = styled.span`
  margin: 0 6px;
  line-height: 11px;
  text-align: center;
`;

const Clock = styled.span`
  margin-left: 8px;
  line-height: 12px;
  text-align: right;
`;

const NotifyDot = styled.span`
  display: flex;
  align-items: center;
  justify-content: center;
  width: 15px;
  height: 15px;
  margin-left: -2px;
  border-radius: 50%;
  background: #1a6f7f;
  color: #dfeef0;
  font-size: 6.6px;
`;
